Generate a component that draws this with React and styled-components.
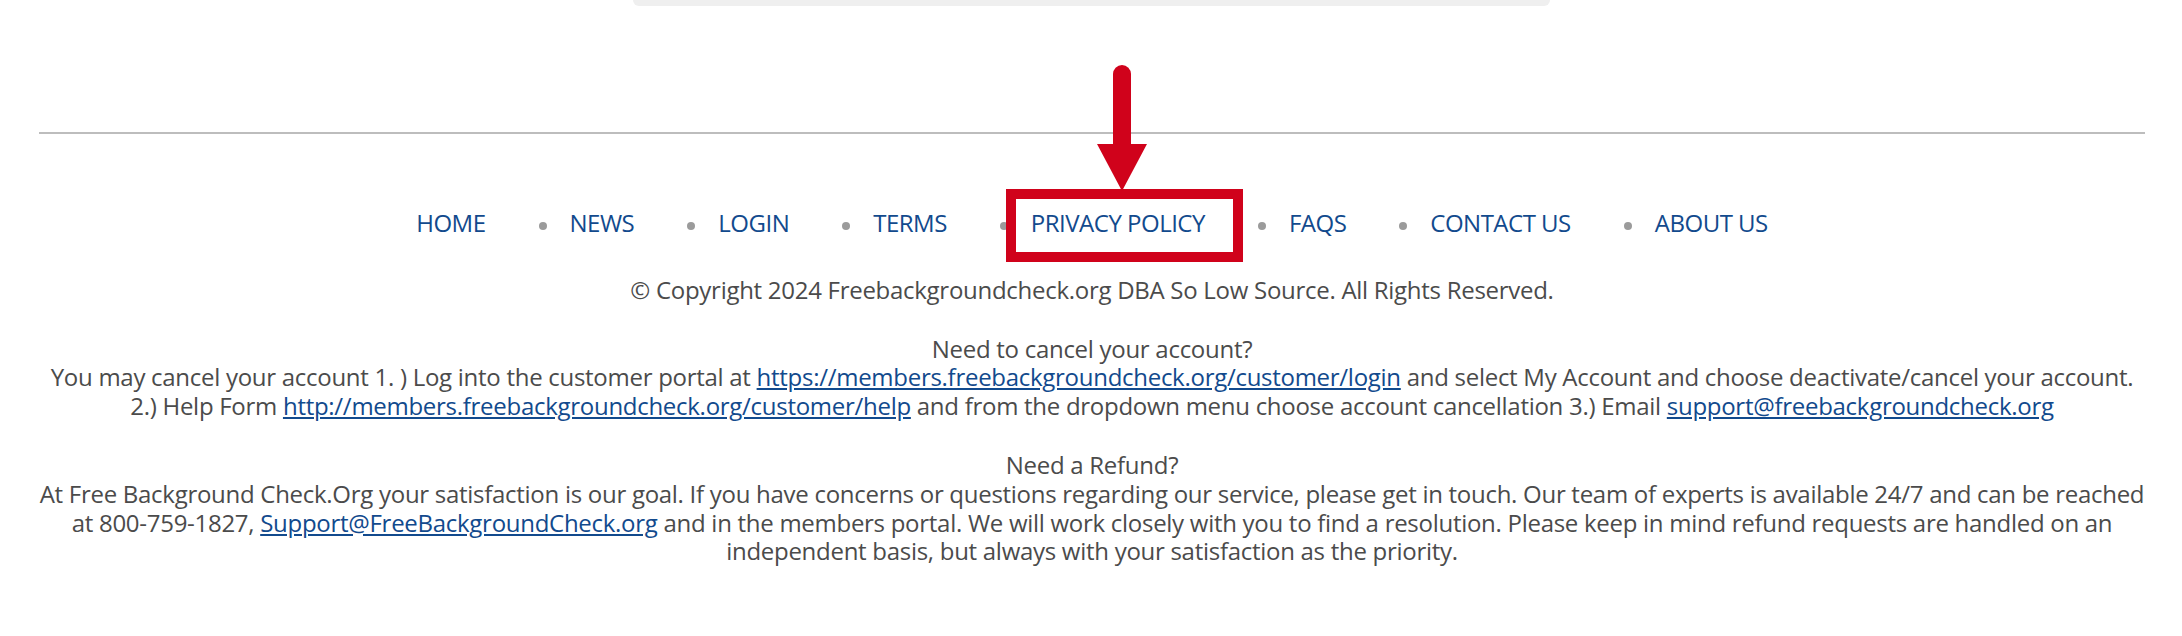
import React from "react";
import styled, { createGlobalStyle } from "styled-components";

const Global = createGlobalStyle`
  html, body { margin: 0; padding: 0; background: #ffffff; }
  body { font-family: "Open Sans", "Noto Sans", "Liberation Sans", sans-serif; }
`;

const Page = styled.div`
  width: 2182px;
  min-height: 636px;
`;

const CardEdge = styled.div`
  width: 917px;
  height: 6px;
  margin: 0 auto;
  background: #efefef;
  border-radius: 0 0 10px 10px;
`;

const Footer = styled.footer`
  margin: 126px 37px 0 39px;
  text-align: center;
  font-size: 24px;
  line-height: 28.8px;
  letter-spacing: -0.28px;
  color: #4b4b4b;
`;

const Rule = styled.hr`
  margin: 0;
  border: 0;
  height: 2px;
  background: #bdbdbd;
`;

const Nav = styled.ul`
  list-style: none;
  margin: 75px 0 0;
  padding: 0;
  display: flex;
  justify-content: center;
  align-items: center;
  letter-spacing: -0.5px;
`;

const NavItem = styled.li`
  display: flex;
  align-items: center;
  & + &::before {
    content: "";
    width: 8px;
    height: 8px;
    border-radius: 50%;
    background: #9b9b9b;
    margin: 6px 23px 0 53px;
  }
`;

const NavLink = styled.a`
  position: relative;
  color: #124a8d;
  text-decoration: none;
  white-space: nowrap;
`;

const Highlight = styled.span`
  position: absolute;
  left: -25px;
  top: -20px;
  width: 237px;
  height: 73px;
  box-sizing: border-box;
  border: 10px solid #d0021b;
  pointer-events: none;
`;

const Arrow = styled.svg`
  position: absolute;
  left: 66px;
  top: -144px;
  width: 50px;
  height: 126px;
  z-index: 2;
`;

const Copy = styled.p`
  margin: 38px 0 0;
`;

const Block = styled.p`
  margin: 30px 0 0;
`;

const TextLink = styled.a`
  color: #124a8d;
  text-decoration: underline;
`;

const items = ["HOME", "NEWS", "LOGIN", "TERMS", "PRIVACY POLICY", "FAQS", "CONTACT US", "ABOUT US"];

export default function App() {
  return (
    <Page>
      <Global />
      <CardEdge />
      <Footer>
        <Rule />
        <Nav>
          {items.map((label) => (
            <NavItem key={label}>
              <NavLink href="#">
                {label}
                {label === "PRIVACY POLICY" && (
                  <>
                    <Highlight />
                    <Arrow viewBox="0 0 50 126">
                      <path d="M16 9 A9 9 0 0 1 34 9 L34 82 L16 82 Z" fill="#d0021b" />
                      <polygon points="0,79 50,79 25,126" fill="#d0021b" />
                    </Arrow>
                  </>
                )}
              </NavLink>
            </NavItem>
          ))}
        </Nav>
        <Copy>© Copyright 2024 Freebackgroundcheck.org DBA So Low Source. All Rights Reserved.</Copy>
        <Block>
          Need to cancel your account?
          <br />
          You may cancel your account 1. ) Log into the customer portal at{" "}
          <TextLink href="#">https://members.freebackgroundcheck.org/customer/login</TextLink> and select My Account and
          choose deactivate/cancel your account.
          <br />
          2.) Help Form <TextLink href="#">http://members.freebackgroundcheck.org/customer/help</TextLink> and from the
          dropdown menu choose account cancellation 3.) Email{" "}
          <TextLink href="#">support@freebackgroundcheck.org</TextLink>
        </Block>
        <Block>
          Need a Refund?
          <br />
          At Free Background Check.Org your satisfaction is our goal. If you have concerns or questions regarding our
          service, please get in touch. Our team of experts is available 24/7 and can be reached
          <br />
          at 800-759-1827, <TextLink href="#">Support@FreeBackgroundCheck.org</TextLink> and in the members portal. We
          will work closely with you to find a resolution. Please keep in mind refund requests are handled on an
          <br />
          independent basis, but always with your satisfaction as the priority.
        </Block>
      </Footer>
    </Page>
  );
}
